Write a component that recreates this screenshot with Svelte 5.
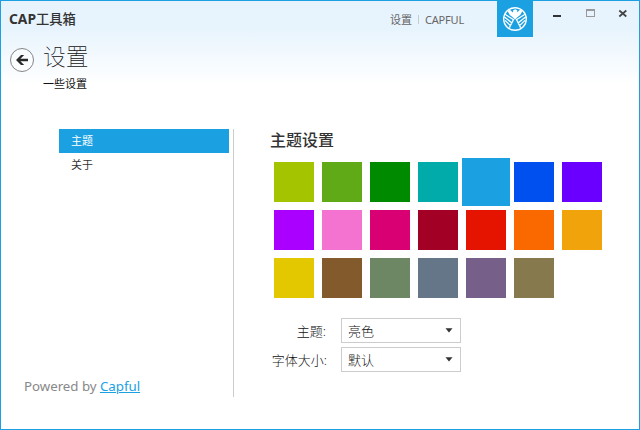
<script>
  const colors = [
    '#a4c400', '#60a917', '#008a00', '#00aba9', '#1ba1e2', '#0050ef', '#6a00ff',
    '#aa00ff', '#f472d0', '#d80073', '#a20025', '#e51400', '#fa6800', '#f0a30a',
    '#e3c800', '#825a2c', '#6d8764', '#647687', '#76608a', '#87794e'
  ];
  const fields = [
    { label: '主题:', value: '亮色' },
    { label: '字体大小:', value: '默认' }
  ];
  const tabs = ['主题', '关于'];
  let accent = $state('#1ba1e2');
  let tab = $state('主题');
</script>

<div class="window">
  <header>
    <div class="app-name">CAP<span>工具箱</span></div>
    <nav><span class="cn">设置</span><i></i><span class="user">CAPFUL</span></nav>
    <div class="logo">
      <svg width="26" height="26" viewBox="0 0 26 26">
        <circle cx="13" cy="13" r="11.3" fill="none" stroke="#fff" stroke-width="1.4" />
        <path fill="#fff" d="M7.6 3.4 11 6.4 11.2 4.2 13.4 3.2 15.4 4.4 14.8 6.4 18.4 3.4 20.5 5 18.2 9 15 11.6 13 13.4 11 11.6 7.8 9 5.5 5Z" />
        <path fill="none" stroke="#fff" stroke-width="1.3" d="M3 8.3 11.6 13.8M2.4 11 10 17M3 14.4 8.4 19.6M23 8.3 14.4 13.8M23.6 11 16 17M23 14.4 17.6 19.6M11.8 13 7.4 21.6M14.2 13 18.6 21.6" />
      </svg>
    </div>
    <div class="controls">
      <svg width="80" height="20" viewBox="0 0 80 20" shape-rendering="crispEdges">
        <path fill="#333" d="M3 10h8v2H3z" />
        <path fill="#999" fill-rule="evenodd" d="M36 4h9v8h-9zM37 6v5h7V6z" />
        <path fill="none" stroke="#444" stroke-width="1.7" shape-rendering="auto" d="m69.3 5.5 7 6m0-6-7 6" />
      </svg>
    </div>
  </header>

  <div class="heading">
    <svg class="back" width="26" height="26" viewBox="0 0 26 26">
      <circle cx="13" cy="13" r="11.5" fill="#fff" fill-opacity=".5" stroke="#858585" />
      <path fill="#292929" d="m7 13 5-5h3.2l-3.8 3.8H19v2.5h-7.6l3.8 3.7H12z" />
    </svg>
    <div class="titles">
      <h1>设置</h1>
      <p>一些设置</p>
    </div>
  </div>

  <main>
    <aside>
      <ul>
        {#each tabs as t}
          <li class:active={t === tab}>{t}</li>
        {/each}
      </ul>
      <div class="powered">Powered by <span class="link">Capful</span></div>
    </aside>
    <section>
      <h2>主题设置</h2>
      <div class="swatches">
        {#each colors as c}
          <div class="swatch" class:selected={c === accent}><b style="background:{c}"></b></div>
        {/each}
      </div>
      <div class="fields">
        {#each fields as f}
          <div class="field">
            <span class="label">{f.label}</span>
            <div class="select">
              {f.value}
              <svg width="8" height="5" viewBox="0 0 8 5"><path fill="#333" d="M.5.3h7L4 4.6z" /></svg>
            </div>
          </div>
        {/each}
      </div>
    </section>
  </main>
</div>

<style>
  :global(body) { margin: 0; background: #fff; }
  .window {
    box-sizing: border-box; width: 640px; height: 430px; border: 1px solid #1ba1e2;
    background: linear-gradient(#e6f3fd 0, #e8f4fd 28px, #fff 84px);
    font-family: "Noto Sans", "Noto Sans CJK SC", sans-serif; color: #333;
    display: flex; flex-direction: column; overflow: hidden;
  }
  h1, h2, p, ul { margin: 0; padding: 0; font-weight: 400; }
  header { display: flex; height: 45px; flex: none; }
  .app-name { width: 389px; box-sizing: border-box; padding-left: 8px; font-size: 13.8px; font-weight: 700; line-height: 35px; }
  .app-name span { font-size: 13.3px; font-weight: 500; }
  nav { width: 107px; display: flex; height: 37px; align-items: center; font-size: 11px; color: #666; white-space: nowrap; }
  nav i { width: 1px; height: 9px; background: #c5cdd2; margin: 0 6px 0 6px; }
  .cn { line-height: 15px; padding-bottom: 1px; }
  .user { letter-spacing: -.2px; }
  .logo { width: 36px; height: 36px; background: #1ba1e2; display: grid; place-items: center; }
  .controls { padding: 4px 0 0 17px; }
  .heading { display: flex; height: 83px; flex: none; padding-left: 8px; }
  .back { margin-top: 1px; }
  .titles { padding-left: 8px; }
  h1 { font-size: 22.8px; line-height: 20px; font-weight: 100; font-family: "Noto Sans CJK SC", sans-serif; color: #111; }
  p { font-size: 11px; line-height: 16px; margin-top: 10px; color: #111; }
  main { display: flex; height: 268px; }
  aside { box-sizing: border-box; width: 233px; height: 268px; border-right: 1px solid #ccc; display: flex; flex-direction: column; justify-content: space-between; }
  ul { list-style: none; padding-left: 58px; }
  li { width: 158px; height: 24px; line-height: 24px; padding-left: 12px; font-size: 11px; }
  li.active { background: #1ba1e2; color: #fff; }
  .powered { padding-left: 23px; font-size: 13.3px; letter-spacing: -.03px; line-height: 20px; padding-bottom: 1px; color: #888; white-space: nowrap; }
  .link { color: #1ba1e2; text-decoration: underline; }
  section { padding-left: 36px; }
  h2 { font-size: 16px; line-height: 22px; font-weight: 500; height: 29px; }
  .swatches { display: grid; grid-template-columns: repeat(7, 48px); grid-auto-rows: 48px; }
  .swatch { padding: 4px; }
  .swatch b { display: block; width: 100%; height: 100%; }
  .selected { padding: 0; }
  .fields { display: flex; flex-direction: column; gap: 4px; padding-top: 16px; }
  .field { display: flex; align-items: center; height: 25px; font-size: 13px; font-weight: 300; color: #111; }
  .label { width: 56px; text-align: right; margin-right: 15px; white-space: nowrap; }
  .field:last-child .label { width: 57px; margin-right: 14px; }
  .select { box-sizing: border-box; width: 120px; height: 25px; border: 1px solid #ccc; background: #fff; padding: 0 7px 0 6px; display: flex; align-items: center; justify-content: space-between; }
</style>
